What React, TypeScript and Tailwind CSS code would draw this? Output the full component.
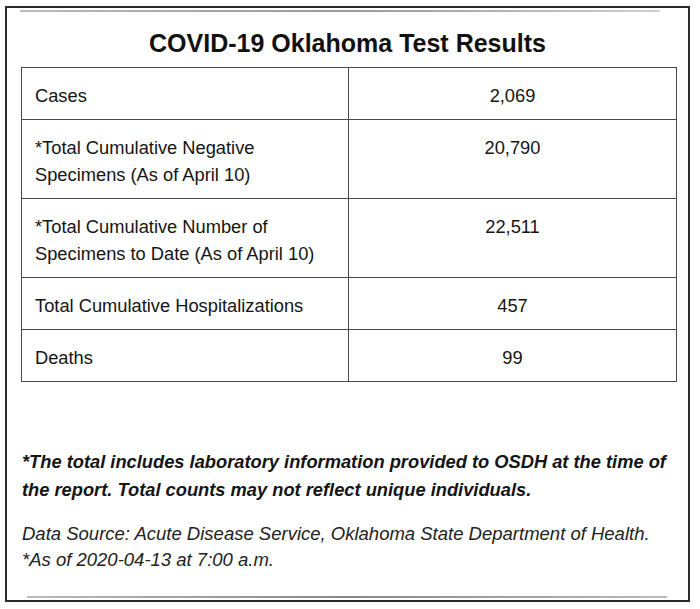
import React from "react";

const rows: { label: string[]; value: string }[] = [
  { label: ["Cases"], value: "2,069" },
  { label: ["*Total Cumulative Negative", "Specimens (As of April 10)"], value: "20,790" },
  { label: ["*Total Cumulative Number of", "Specimens to Date (As of April 10)"], value: "22,511" },
  { label: ["Total Cumulative Hospitalizations"], value: "457" },
  { label: ["Deaths"], value: "99" },
];

export default function App() {
  return (
    <div
      className="w-[700px] h-[609px] bg-white pt-[6px] pl-[5px] text-[#151515]"
      style={{ fontFamily: '"Liberation Sans", Arial, sans-serif' }}
    >
      <div className="w-[685px] h-[596px] border-[2px] border-[#2b2b2b] flex flex-col">
        <div className="mt-[2px] ml-[13px] w-[640px] h-[2px] bg-gradient-to-r from-[#bbbbbb] via-[#999999] to-[#cfcfcf]" />
        <h1 className="mt-[15px] h-[32px] leading-[32px] text-[25px] font-bold text-center text-[#111]">
          COVID-19 Oklahoma Test Results
        </h1>
        <div className="mt-[8px] ml-[14px] w-[656px] border-[1.5px] border-[#4a4a4a] flex flex-col">
          {rows.map((r, i) => (
            <div
              key={i}
              className={`grid grid-cols-[327px_1fr] ${i > 0 ? "border-t-[1.5px] border-[#4a4a4a]" : ""}`}
            >
              <div className="pl-[13px] pt-[14px] pb-[10px] text-[18.3px] leading-[27px] border-r-[1.5px] border-[#4a4a4a]">
                {r.label.map((l, j) => (
                  <div key={j}>{l}</div>
                ))}
              </div>
              <div className="pt-[14px] pb-[10px] text-[18.3px] leading-[27px] text-center">{r.value}</div>
            </div>
          ))}
        </div>
        <div className="mt-[66px] ml-[15px] text-[18.3px] leading-[28px] font-bold italic">
          <div>*The total includes laboratory information provided to OSDH at the time of</div>
          <div>the report. Total counts may not reflect unique individuals.</div>
        </div>
        <div className="mt-[17px] ml-[15px] text-[18.5px] leading-[26px] italic text-[#222]">
          <div>Data Source: Acute Disease Service, Oklahoma State Department of Health.</div>
          <div>*As of 2020-04-13 at 7:00 a.m.</div>
        </div>
        <div className="mt-auto mb-[2px] ml-[20px] w-[640px] h-[2px] bg-gradient-to-r from-[#bbbbbb] via-[#888888] to-[#bbbbbb]" />
      </div>
    </div>
  );
}
